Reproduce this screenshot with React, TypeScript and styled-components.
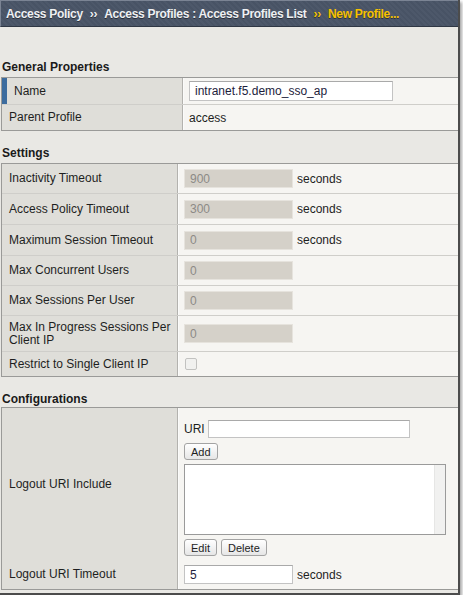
import styled, { createGlobalStyle } from "styled-components";

const GlobalStyle = createGlobalStyle`
  html, body {
    margin: 0;
    padding: 0;
    background: #ffffff;
  }
  body {
    font-family: "Liberation Sans", Arial, sans-serif;
    font-size: 12px;
    color: #1e1e1e;
  }
`;

const settings = [
  { label: "Inactivity Timeout", value: "900", unit: true, h: 30 },
  { label: "Access Policy Timeout", value: "300", unit: true, h: 31 },
  { label: "Maximum Session Timeout", value: "0", unit: true, h: 31 },
  { label: "Max Concurrent Users", value: "0", unit: false, h: 30 },
  { label: "Max Sessions Per User", value: "0", unit: false, h: 30 },
  { label: "Max In Progress Sessions Per Client IP", value: "0", unit: false, h: 36 },
];

export default function App() {
  return (
    <>
      <GlobalStyle />
      <Frame>
        <Header>
          <Crumb>Access Policy</Crumb>
          <Sep>››</Sep>
          <Crumb>Access Profiles : Access Profiles List</Crumb>
          <Sep $active>››</Sep>
          <Crumb $active>New Profile...</Crumb>
        </Header>

        <Content>
          <SectionTitle $first>General Properties</SectionTitle>
          <Table>
            <Row $h={27} $col={181}>
              <Label $marked>Name</Label>
              <Value>
                <TextInput $w={204} $h={20} defaultValue="intranet.f5.demo_sso_ap" />
              </Value>
            </Row>
            <Row $h={25} $col={181}>
              <Label>Parent Profile</Label>
              <Value>access</Value>
            </Row>
          </Table>

          <SectionTitle>Settings</SectionTitle>
          <Table>
            {settings.map((s) => (
              <Row key={s.label} $h={s.h} $col={176}>
                <Label>{s.label}</Label>
                <Value>
                  <DisabledInput value={s.value} readOnly />
                  {s.unit && <Unit>seconds</Unit>}
                </Value>
              </Row>
            ))}
            <Row $h={24} $col={176}>
              <Label>Restrict to Single Client IP</Label>
              <Value>
                <Check />
              </Value>
            </Row>
          </Table>

          <SectionTitle $tight>Configurations</SectionTitle>
          <Table>
            <Row $h={152} $col={176}>
              <Label>Logout URI Include</Label>
              <StackValue>
                <UriLine>
                  <span>URI</span>
                  <TextInput $w={202} $h={18} />
                </UriLine>
                <Buttons>
                  <Button>Add</Button>
                </Buttons>
                <ListBox>
                  <ListArea />
                  <ScrollTrack />
                </ListBox>
                <Buttons>
                  <Button>Edit</Button>
                  <Button>Delete</Button>
                </Buttons>
              </StackValue>
            </Row>
            <Row $h={29} $col={176}>
              <Label>Logout URI Timeout</Label>
              <Value>
                <TextInput $w={109} $h={19} defaultValue="5" />
                <Unit>seconds</Unit>
              </Value>
            </Row>
          </Table>
        </Content>
      </Frame>
    </>
  );
}

const Frame = styled.div`
  width: 458px;
  height: 593px;
  background: #e9e8e4;
  border-right: 2px solid #4c4c4c;
  border-bottom: 2px solid #4c4c4c;
  box-shadow: 2px 2px 3px rgba(0, 0, 0, 0.35);
  overflow: hidden;
`;

const Header = styled.div`
  height: 25px;
  display: flex;
  align-items: center;
  gap: 6px;
  padding-left: 5px;
  background: repeating-linear-gradient(
    45deg,
    #4d586a 0 2px,
    #485365 2px 4px
  );
  border-top: 1px solid #7b8494;
  border-left: 1px solid #7b8494;
  border-bottom: 1px solid #2f3744;
  font-size: 12px;
  font-weight: bold;
  letter-spacing: -0.3px;
  white-space: nowrap;
`;

const Crumb = styled.span<{ $active?: boolean }>`
  color: ${(p) => (p.$active ? "#f6c100" : "#eef0f3")};
  text-shadow: 0 1px 0 rgba(0, 0, 0, 0.45);
`;

const Sep = styled(Crumb)`
  font-size: 12px;
  padding: 0 1px;
`;

const Content = styled.div`
  padding: 0 0 0 1px;
`;

const SectionTitle = styled.div<{ $tight?: boolean; $first?: boolean }>`
  font-weight: bold;
  font-size: 12px;
  line-height: 16px;
  height: 16px;
  padding: ${(p) => (p.$first ? "32px" : "14px")} 0
    ${(p) => (p.$tight ? "0" : "2px")} 1px;
  color: #1a1a1a;
`;

const Table = styled.div`
  border: 1px solid #9a9a98;
  border-right: none;
`;

const Row = styled.div<{ $h: number; $col: number }>`
  display: grid;
  grid-template-columns: ${(p) => p.$col}px 1fr;
  box-sizing: border-box;
  height: ${(p) => p.$h}px;
  border-bottom: 1px solid #cfceca;
  &:last-child {
    border-bottom: none;
  }
`;

const Label = styled.div<{ $marked?: boolean }>`
  background: #dfded9;
  border-right: 1px solid #b3b2ae;
  display: flex;
  align-items: center;
  padding: 0 6px 0 ${(p) => (p.$marked ? "12px" : "7px")};
  line-height: 13px;
  box-shadow: ${(p) => (p.$marked ? "inset 5px 0 0 #3c6c9e" : "none")};
`;

const Value = styled.div`
  background: #f6f5f2;
  border-left: 1px solid #fbfbfa;
  display: flex;
  align-items: center;
  gap: 4px;
  padding: 0 5px;
`;

const StackValue = styled(Value)`
  flex-direction: column;
  align-items: flex-start;
  gap: 4px;
  padding: 12px 5px 5px;
`;

const TextInput = styled.input<{ $w: number; $h: number }>`
  box-sizing: border-box;
  width: ${(p) => p.$w}px;
  height: ${(p) => p.$h}px;
  border: 1px solid #c3c3c3;
  border-top-color: #a9a9a9;
  background: #ffffff;
  font-family: "Liberation Sans", Arial, sans-serif;
  font-size: 12px;
  color: #1d1d3c;
  padding: 0 5px;
  outline: none;
`;

const DisabledInput = styled.input`
  box-sizing: border-box;
  width: 109px;
  height: 19px;
  border: 1px solid #e6e3dd;
  background: #d5d1c9;
  font-family: "Liberation Sans", Arial, sans-serif;
  font-size: 12px;
  color: #8c8a86;
  padding: 0 5px;
  outline: none;
`;

const Unit = styled.span`
  color: #1e1e1e;
`;

const Check = styled.span`
  display: block;
  width: 10px;
  height: 10px;
  margin-left: 1px;
  border: 1px solid #c2c2c0;
  border-radius: 2px;
  background: #f1f1ef;
`;

const UriLine = styled.div`
  display: flex;
  align-items: center;
  gap: 3px;
  height: 18px;
  margin-bottom: 1px;
`;

const Buttons = styled.div`
  display: flex;
  gap: 4px;
`;

const Button = styled.button`
  height: 17px;
  padding: 0 6px;
  border: 1px solid #a3a3a3;
  border-radius: 3px;
  background: linear-gradient(#ffffff, #e6e6e6);
  font-family: "Liberation Sans", Arial, sans-serif;
  font-size: 11px;
  color: #1e1e1e;
  line-height: 14px;
  cursor: pointer;
`;

const ListBox = styled.div`
  width: 262px;
  height: 71px;
  box-sizing: border-box;
  border: 1px solid #9a9a9a;
  background: #ffffff;
  display: flex;
`;

const ListArea = styled.textarea`
  flex: 1;
  border: none;
  resize: none;
  outline: none;
  background: transparent;
`;

const ScrollTrack = styled.div`
  width: 10px;
  background: #f1f1f0;
  border-left: 1px solid #e6e6e5;
`;
